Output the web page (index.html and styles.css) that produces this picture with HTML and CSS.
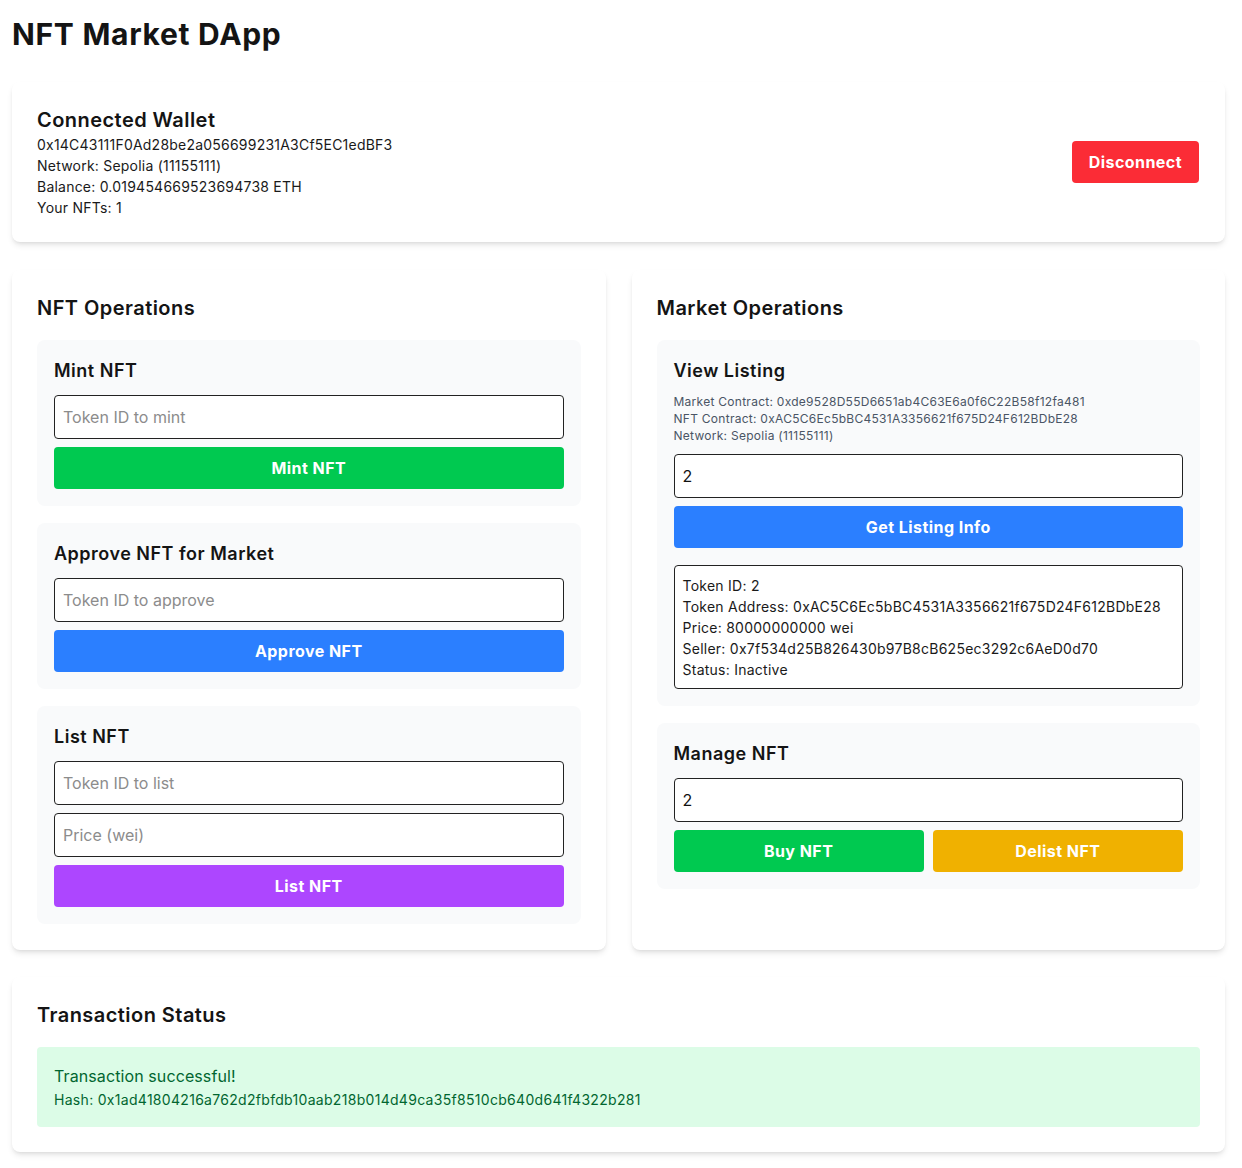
FILE: index.html
```html
<!DOCTYPE html>
<html lang="en">
<head>
<meta charset="utf-8">
<title>NFT Market DApp</title>
<link rel="stylesheet" href="styles.css">
</head>
<body>
<div class="page">
  <h1 class="title">NFT Market DApp</h1>

  <section class="card wallet">
    <div class="wallet-info">
      <h2 class="card-title">Connected Wallet</h2>
      <p class="line">0x14C43111F0Ad28be2a056699231A3Cf5EC1edBF3</p>
      <p class="line">Network: Sepolia (11155111)</p>
      <p class="line">Balance: 0.019454669523694738 ETH</p>
      <p class="line">Your NFTs: 1</p>
    </div>
    <button class="btn btn-red btn-disconnect">Disconnect</button>
  </section>

  <div class="ops">
    <section class="card ops-card">
      <h2 class="card-title card-title-gap">NFT Operations</h2>
      <div class="stack">
        <div class="box">
          <h3 class="box-title">Mint NFT</h3>
          <div class="form">
            <input class="field" type="text" placeholder="Token ID to mint">
            <button class="btn btn-green">Mint NFT</button>
          </div>
        </div>
        <div class="box">
          <h3 class="box-title">Approve NFT for Market</h3>
          <div class="form">
            <input class="field" type="text" placeholder="Token ID to approve">
            <button class="btn btn-blue">Approve NFT</button>
          </div>
        </div>
        <div class="box">
          <h3 class="box-title">List NFT</h3>
          <div class="form">
            <input class="field" type="text" placeholder="Token ID to list">
            <input class="field" type="text" placeholder="Price (wei)">
            <button class="btn btn-purple">List NFT</button>
          </div>
        </div>
      </div>
    </section>

    <section class="card ops-card">
      <h2 class="card-title card-title-gap">Market Operations</h2>
      <div class="stack">
        <div class="box">
          <h3 class="box-title box-title-tight">View Listing</h3>
          <div class="meta">
            <p>Market Contract: 0xde9528D55D6651ab4C63E6a0f6C22B58f12fa481</p>
            <p>NFT Contract: 0xAC5C6Ec5bBC4531A3356621f675D24F612BDbE28</p>
            <p>Network: Sepolia (11155111)</p>
          </div>
          <div class="form">
            <input class="field" type="text" value="2">
            <button class="btn btn-blue">Get Listing Info</button>
          </div>
          <div class="result">
            <p>Token ID: 2</p>
            <p>Token Address: 0xAC5C6Ec5bBC4531A3356621f675D24F612BDbE28</p>
            <p>Price: 80000000000 wei</p>
            <p>Seller: 0x7f534d25B826430b97B8cB625ec3292c6AeD0d70</p>
            <p>Status: Inactive</p>
          </div>
        </div>
        <div class="box">
          <h3 class="box-title">Manage NFT</h3>
          <div class="form">
            <input class="field" type="text" value="2">
            <div class="pair">
              <button class="btn btn-green">Buy NFT</button>
              <button class="btn btn-yellow">Delist NFT</button>
            </div>
          </div>
        </div>
      </div>
    </section>
  </div>

  <section class="card status">
    <h2 class="card-title card-title-gap">Transaction Status</h2>
    <div class="success">
      <p class="success-msg">Transaction successful!</p>
      <p class="success-hash">Hash: 0x1ad41804216a762d2fbfdb10aab218b014d49ca35f8510cb640d641f4322b281</p>
    </div>
  </section>
</div>
</body>
</html>
```

FILE: styles.css
```css
* {
  box-sizing: border-box;
}

html, body {
  margin: 0;
  padding: 0;
  background: #ffffff;
}

body {
  font-family: Inter, "Noto Sans", "Liberation Sans", sans-serif;
  color: #111111;
}

p, h1, h2, h3 {
  margin: 0;
}

.page {
  padding: 16px 17px 16px 12px;
}

.title {
  font-size: 30px;
  line-height: 36px;
  font-weight: 700;
  letter-spacing: 0.7px;
  margin-bottom: 30px;
  color: #141414;
}

.card {
  background: #ffffff;
  border-radius: 8px;
  box-shadow: 0 4px 6px -1px rgba(0, 0, 0, 0.1), 0 2px 4px -2px rgba(0, 0, 0, 0.1);
  padding: 24px 25px 24px 25px;
}

.wallet {
  display: flex;
  align-items: center;
  justify-content: space-between;
}

.card-title {
  font-size: 20px;
  line-height: 28px;
  font-weight: 600;
  letter-spacing: 0.45px;
  color: #141414;
}

.card-title-gap {
  margin-bottom: 18px;
}

.line {
  font-size: 14px;
  line-height: 21px;
  letter-spacing: 0.22px;
  color: #1a1a1a;
}

.btn {
  border: none;
  border-radius: 4px;
  color: #ffffff;
  font-family: inherit;
  font-size: 16px;
  line-height: 24px;
  font-weight: 700;
  letter-spacing: 0.45px;
  padding: 9px 16px;
  width: 100%;
  cursor: pointer;
}

.btn-disconnect {
  width: auto;
  padding: 9px 17px;
  margin-right: 1px;
}

.btn-red { background: #fb2c36; }
.btn-green { background: #00c950; }
.btn-blue { background: #2b7fff; }
.btn-purple { background: #ad46ff; }
.btn-yellow { background: #f0b100; }

.ops {
  display: grid;
  grid-template-columns: 1fr 1fr;
  gap: 26px;
  margin-top: 28px;
}

.ops-card {
  padding-bottom: 26px;
}

.stack {
  display: flex;
  flex-direction: column;
  gap: 17px;
}

.box {
  background: #f9fafb;
  border-radius: 8px;
  padding: 17px;
}

.box-title {
  font-size: 18px;
  line-height: 28px;
  font-weight: 600;
  letter-spacing: 0.5px;
  color: #141414;
  margin-bottom: 10px;
}

.box-title-tight {
  margin-bottom: 8px;
}

.form {
  display: flex;
  flex-direction: column;
  gap: 8px;
}

.field {
  display: block;
  width: 100%;
  height: 44px;
  border: 1px solid #222222;
  border-radius: 4px;
  background: #ffffff;
  padding: 0 8px;
  font-family: inherit;
  font-size: 16px;
  color: #111111;
  outline: none;
}

.field::placeholder {
  color: #8c8c8c;
}

.pair {
  display: grid;
  grid-template-columns: 1fr 1fr;
  gap: 9px;
}

.meta {
  font-size: 12px;
  line-height: 17px;
  letter-spacing: 0.27px;
  color: #4a5565;
  margin-bottom: 10px;
}

.result {
  margin-top: 17px;
  border: 1px solid #222222;
  border-radius: 4px;
  background: #ffffff;
  padding: 9px 8px 8px;
  font-size: 14px;
  line-height: 21px;
  letter-spacing: 0.25px;
  color: #1a1a1a;
}

.status {
  margin-top: 27px;
  padding-bottom: 25px;
}

.success {
  background: #dcfce7;
  border-radius: 4px;
  padding: 17px;
  color: #016630;
}

.success-msg {
  font-size: 16px;
  line-height: 24px;
  letter-spacing: 0.1px;
}

.success-hash {
  font-size: 14px;
  line-height: 20px;
  letter-spacing: 0.3px;
  margin-top: 2px;
}
```
